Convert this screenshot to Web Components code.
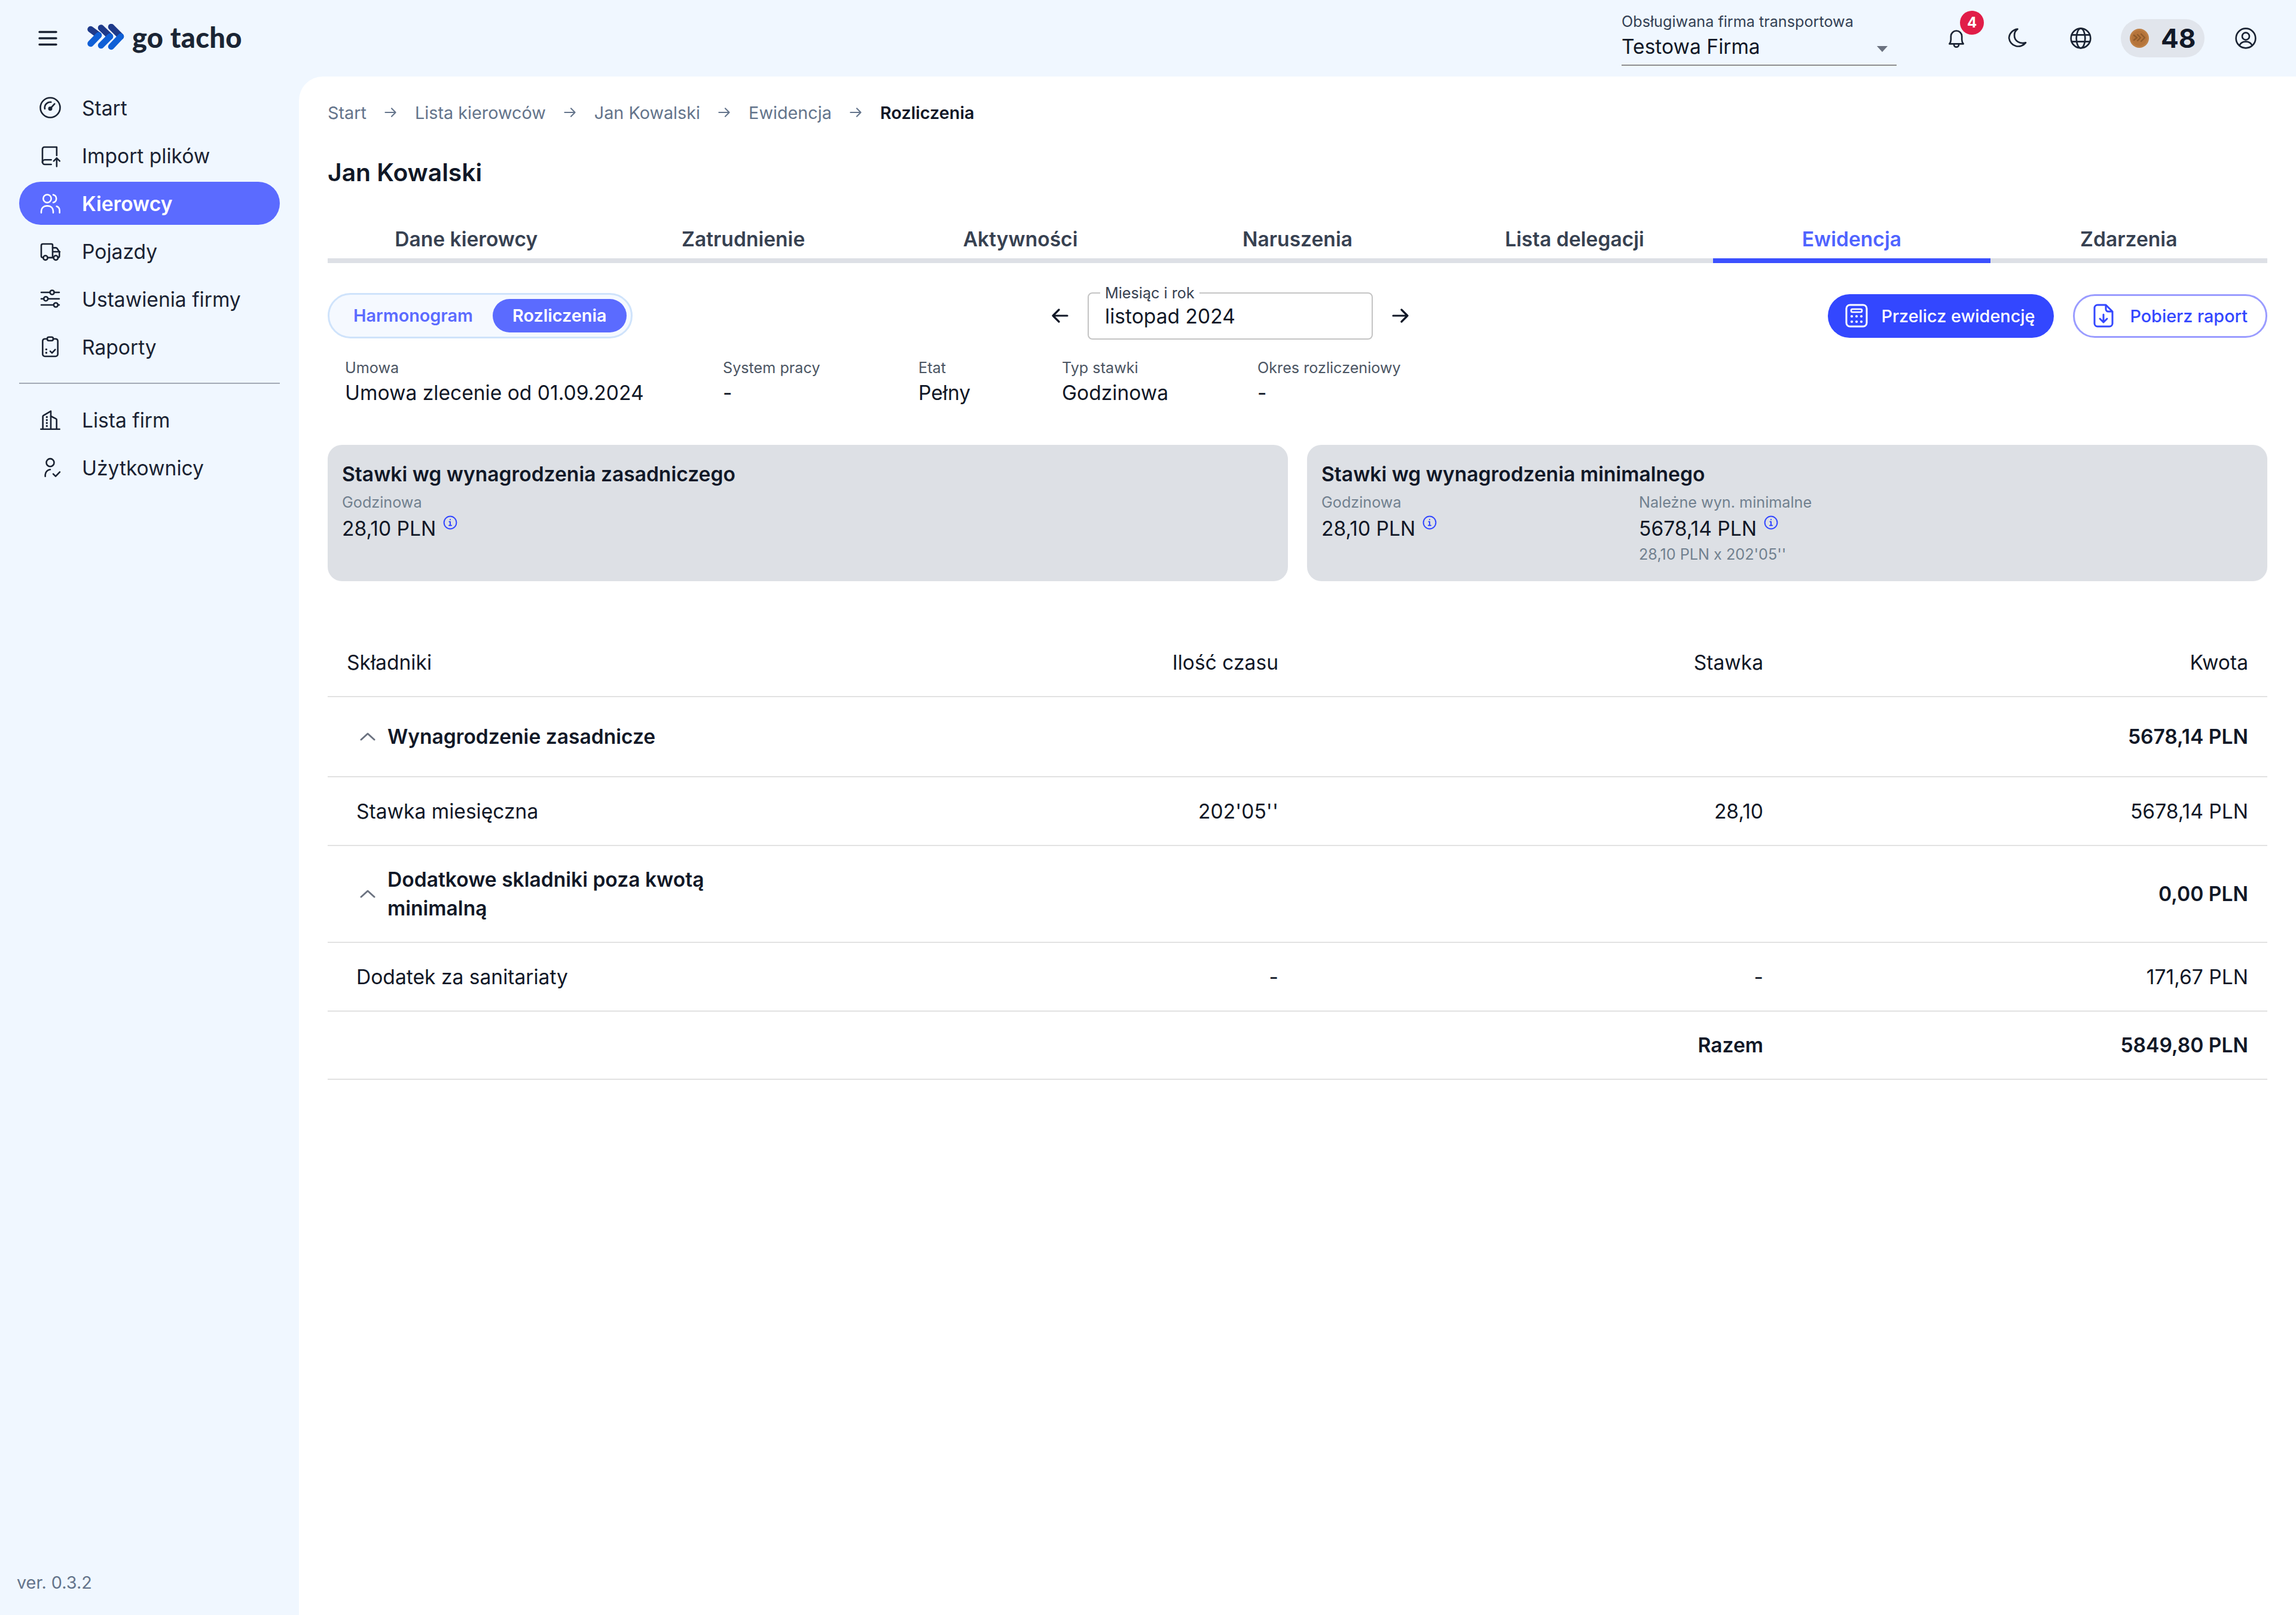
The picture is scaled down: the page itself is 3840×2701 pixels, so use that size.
<!DOCTYPE html>
<html lang="pl">
<head>
<meta charset="utf-8">
<title>go tacho</title>
<style>
html, body { margin: 0; padding: 0; background: #f0f7ff; }
body { font-family: Inter, "Noto Sans", sans-serif; color: #111827; }
</style>
</head>
<body>
<app-shell>
    <top-bar slot="top"></top-bar>
    <side-nav slot="side">
        <nav-item icon="gauge">Start</nav-item>
        <nav-item icon="upload">Import plików</nav-item>
        <nav-item icon="users" active>Kierowcy</nav-item>
        <nav-item icon="truck">Pojazdy</nav-item>
        <nav-item icon="sliders">Ustawienia firmy</nav-item>
        <nav-item icon="clipboard">Raporty</nav-item>
        <nav-item icon="building" slot="second">Lista firm</nav-item>
        <nav-item icon="usercheck" slot="second">Użytkownicy</nav-item>
    </side-nav>
    <main-panel slot="main">
        <bread-crumbs items="Start|Lista kierowców|Jan Kowalski|Ewidencja|Rozliczenia"></bread-crumbs>
        <page-title>Jan Kowalski</page-title>
        <tab-bar items="Dane kierowcy|Zatrudnienie|Aktywności|Naruszenia|Lista delegacji|Ewidencja|Zdarzenia" active="5"></tab-bar>
        <tool-bar></tool-bar>
        <info-row></info-row>
        <rate-cards>
            <rate-card heading="Stawki wg wynagrodzenia zasadniczego">
                <rate-value label="Godzinowa" value="28,10 PLN"></rate-value>
            </rate-card>
            <rate-card heading="Stawki wg wynagrodzenia minimalnego">
                <rate-value label="Godzinowa" value="28,10 PLN"></rate-value>
                <rate-value label="Należne wyn. minimalne" value="5678,14 PLN" note="28,10 PLN x 202'05''"></rate-value>
            </rate-card>
        </rate-cards>
        <pay-table>
            <pay-row kind="head" h="114" cells="Składniki|Ilość czasu|Stawka|Kwota"></pay-row>
            <pay-row kind="group" h="134" cells="Wynagrodzenie zasadnicze|||5678,14 PLN"></pay-row>
            <pay-row kind="item" h="115" cells="Stawka miesięczna|202'05''|28,10|5678,14 PLN"></pay-row>
            <pay-row kind="group" h="162" cells="Dodatkowe skladniki poza kwotą minimalną|||0,00 PLN"></pay-row>
            <pay-row kind="item" h="115" cells="Dodatek za sanitariaty|-|-|171,67 PLN"></pay-row>
            <pay-row kind="total" h="114" cells="||Razem|5849,80 PLN"></pay-row>
        </pay-table>
    </main-panel>
</app-shell>

<script>
const NAV_ICONS = {
    gauge: '<circle cx="12" cy="12" r="9.9"/><path d="M6.6 13.2a5.6 5.6 0 0 1 6.2-6.7"/><path d="M12.6 12.4 16.4 8.2"/><circle cx="12" cy="13" r="1.3" fill="currentColor"/>',
    upload: '<path d="M4.2 19V5.6a2 2 0 0 1 2-2h12.3V12"/><path d="M4.2 18.6a2.3 2.3 0 0 1 2.3-2.3H13"/><path d="M4.2 18.6a2.4 2.4 0 0 0 2.4 2.4H13"/><path d="M18.5 23v-8.4M15.5 17.6l3-3 3 3"/>',
    users: '<circle cx="9" cy="7.3" r="4"/><path d="M15 3.4a4 4 0 0 1 0 7.8"/><path d="M3 21.5v-1.6a5.3 5.3 0 0 1 5.3-5.3h1.4a5.3 5.3 0 0 1 5.3 5.3v1.6"/><path d="M18.4 15a4.6 4.6 0 0 1 3 4.4v2.1"/>',
    truck: '<path d="M5 18.5H4.4A1.6 1.6 0 0 1 3 17V6.4A1.6 1.6 0 0 1 4.6 4.8h8.6a1.2 1.2 0 0 1 1.2 1.2v12.5H9.4"/><path d="M14.4 8.6h3.2a1.6 1.6 0 0 1 1.3.7l2 3a1.6 1.6 0 0 1 .3.9v3.8a1.6 1.6 0 0 1-1.6 1.5"/><path d="M14.4 18.5h1"/><path d="M14.6 12.6h7"/><circle cx="7.2" cy="18.7" r="2.2"/><circle cx="17.6" cy="18.7" r="2.2"/>',
    sliders: '<path d="M3 5.4h8.8M16 5.4h5M3 11.8h2.5M9.7 11.8H21M3 18h12.4M19.8 18H21"/><circle cx="13.9" cy="5.4" r="2.1"/><circle cx="7.6" cy="11.8" r="2.1"/><circle cx="17.6" cy="18" r="2.1"/>',
    clipboard: '<path d="M9 4H6.6a2.2 2.2 0 0 0-2.2 2.2v13.2a2.2 2.2 0 0 0 2.2 2.2h10.8a2.2 2.2 0 0 0 2.2-2.2V6.2A2.2 2.2 0 0 0 17.4 4H15"/><rect x="9" y="2.2" width="6" height="3.6" rx="1.6"/><path d="M12 16.4l1.8 1.8 3.2-3.4"/><path d="M8 14.6h.1M8 18h.1" stroke-width="2"/>',
    building: '<path d="M2.6 21.4h18.8"/><path d="M4.6 21.4V8.6a1 1 0 0 1 .6-.9L12.6 3.4v18"/><path d="M12.6 8.4l5.2 2.6a1 1 0 0 1 .6.9v9.5"/><path d="M8.6 9.2v.1M8.6 12.2v.1M8.6 15.2v.1M8.6 18.2v.1" stroke-width="2"/>',
    usercheck: '<circle cx="12" cy="7" r="3.9"/><path d="M7 20.8v-1.6a5.4 5.4 0 0 1 5-5.2"/><path d="M15 18.4l2.4 2.4 4.2-4.4"/>'
};

class AppShell extends HTMLElement {
    constructor() {
        super();
        this.attachShadow({ mode: 'open' });
    }

    connectedCallback() {
        this.shadowRoot.innerHTML = `
            <style>
            :host {
                display: grid;
                grid-template-columns: 500px 1fr;
                grid-template-rows: 128px 1fr;
                width: 3840px;
                height: 2701px;
                background: #f0f7ff;
                font-family: Inter, "Noto Sans", sans-serif;
                overflow: hidden;
            }
            .top { grid-column: 1 / 3; }
            </style>
            <div class="top"><slot name="top"></slot></div>
            <slot name="side"></slot>
            <slot name="main"></slot>
        `;
    }
}

class TopBar extends HTMLElement {
    constructor() {
        super();
        this.attachShadow({ mode: 'open' });
    }

    connectedCallback() {
        this.shadowRoot.innerHTML = `
            <style>
            :host { display: flex; align-items: center; height: 128px; color: #1a2333; }
            .burger { display: block; margin-left: 62px; width: 36px; height: 36px; }
            .mark { display: block; margin-left: 47px; }
            .word { margin-left: 12px; font: 900 47px/1 Lato, sans-serif; color: #1b2534; letter-spacing: .3px; position: relative; top: -2px; }
            .select { margin-left: auto; width: 460px; border-bottom: 2px solid #8e8e8e; padding-bottom: 6px; }
            .select-label { font-size: 25.2px; line-height: 36px; color: #334155; }
            .select-value { display: flex; justify-content: space-between; align-items: center; font-size: 33.6px; line-height: 48px; color: #111827; }
            .select-value i { width: 0; height: 0; margin: 0 15px 0 0; border: 9px solid transparent; border-top: 10px solid #6b7280; border-bottom: 0; position: relative; top: 4px; }
            svg.ic { display: block; width: 40px; height: 40px; fill: none; stroke: currentColor; stroke-width: 1.6; stroke-linecap: round; stroke-linejoin: round; }
            .bell { position: relative; margin-left: 80px; }
            .badge { position: absolute; left: 26px; top: -26px; width: 40px; height: 40px; border-radius: 50%; background: #e11d48; color: #fff; font-size: 24px; font-weight: 700; line-height: 40px; text-align: center; }
            .moon { margin-left: 63px; }
            .globe { margin-left: 65px; }
            .coins { margin-left: 47px; display: flex; align-items: center; box-sizing: border-box; width: 140px; height: 64px; padding-left: 14px; border-radius: 32px; background: #e1e5ec; }
            .coins b { margin-left: 19px; font-size: 44px; font-weight: 700; color: #111827; }
            .user { margin: 0 64px 0 49px; }
            </style>
            <svg class="burger" viewBox="0 0 36 36" fill="none" stroke="#1a2333" stroke-width="3.4" stroke-linecap="round"><path d="M4 7.5h28M4 18h28M4 28.5h28"/></svg>
            <svg class="mark" width="64" height="48" viewBox="0 0 64 48" fill="none" stroke-width="10.5" stroke-linecap="round">
                <path d="M6.5 9 20 19" stroke="#1e3a8a"/><path d="M20 19 6.5 33" stroke="#0f5fd6"/>
                <path d="M24 6.5 39 21" stroke="#1e3a8a"/><path d="M39 21 24 36" stroke="#0f5fd6"/>
                <path d="M41 5 57 21" stroke="#1e3a8a"/><path d="M57 21 41 38" stroke="#0f5fd6"/>
            </svg>
            <span class="word">go tacho</span>
            <div class="select">
                <div class="select-label">Obsługiwana firma transportowa</div>
                <div class="select-value"><span>Testowa Firma</span><i></i></div>
            </div>
            <div class="bell">
                <svg class="ic" viewBox="0 0 24 24"><path d="M5 17.6c1-1.2 1.5-2.4 1.5-4.1V10a5.5 5.5 0 0 1 11 0v3.5c0 1.7.5 2.9 1.5 4.1z"/><path d="M9.6 17.8v.6a2.4 2.4 0 0 0 4.8 0v-.6"/></svg>
                <span class="badge">4</span>
            </div>
            <svg class="ic moon" viewBox="0 0 24 24"><path d="M11.6 2.8a7.6 7.6 0 0 0-3.2 6.4c0 5.6 5.6 9 11.4 7.2a9.4 9.4 0 0 1-16.8-4.6A9.6 9.6 0 0 1 11.6 2.8z"/></svg>
            <svg class="ic globe" viewBox="0 0 24 24"><circle cx="12" cy="12" r="9.8"/><ellipse cx="12" cy="12" rx="4.4" ry="9.8"/><path d="M3 8.6h18M3 15.4h18"/></svg>
            <div class="coins">
                <svg width="34" height="34" viewBox="0 0 34 34">
                    <circle cx="17" cy="17" r="16" fill="#bd7f45"/>
                    <circle cx="17" cy="17" r="13" fill="#b5743a"/>
                    <g fill="none" stroke="#8f5a2a" stroke-width="2.4" stroke-linecap="round" stroke-linejoin="round"><path d="M8 12l5 4-5 4M14 11l5 5-5 5M20 10l6 6-6 6"/></g>
                </svg>
                <b>48</b>
            </div>
            <svg class="ic user" viewBox="0 0 24 24"><circle cx="12" cy="12" r="9.8"/><circle cx="12" cy="10" r="3.6"/><path d="M5.6 19.4c1-2.6 3.4-4 6.4-4s5.4 1.4 6.4 4"/></svg>
        `;
    }
}

class SideNav extends HTMLElement {
    constructor() {
        super();
        this.attachShadow({ mode: 'open' });
    }

    connectedCallback() {
        this.shadowRoot.innerHTML = `
            <style>
            :host { display: flex; flex-direction: column; box-sizing: border-box; padding: 16px 32px 36px; }
            .list { display: flex; flex-direction: column; gap: 8px; }
            hr { width: 100%; height: 2px; margin: 24px 0; border: 0; background: #a3aab5; }
            .ver { margin-top: auto; font-size: 28.8px; line-height: 36px; color: #64748b; margin-left: -4px; }
            </style>
            <div class="list"><slot></slot></div>
            <hr>
            <div class="list"><slot name="second"></slot></div>
            <div class="ver">ver. 0.3.2</div>
        `;
    }
}

class NavItem extends HTMLElement {
    constructor() {
        super();
        this.attachShadow({ mode: 'open' });
    }

    connectedCallback() {
        const active = this.hasAttribute('active');
        this.shadowRoot.innerHTML = `
            <style>
            :host {
                display: flex;
                align-items: center;
                height: 72px;
                padding-left: 32px;
                border-radius: 36px;
                background: ${active ? '#5b6bff' : 'transparent'};
                color: ${active ? '#fff' : '#1a2333'};
                font-size: 33.6px;
                font-weight: ${active ? 600 : 400};
            }
            svg { width: 40px; height: 40px; margin-right: 33px; fill: none; stroke: currentColor; stroke-width: 1.55; stroke-linecap: round; stroke-linejoin: round; }
            </style>
            <svg viewBox="0 0 24 24">${NAV_ICONS[this.getAttribute('icon')]}</svg>
            <slot></slot>
        `;
    }
}

class MainPanel extends HTMLElement {
    constructor() {
        super();
        this.attachShadow({ mode: 'open' });
    }

    connectedCallback() {
        this.shadowRoot.innerHTML = `
            <style>
            :host { display: block; box-sizing: border-box; padding: 40px 48px 0; background: #fff; border-top-left-radius: 40px; color: #111827; }
            </style>
            <slot></slot>
        `;
    }
}

class BreadCrumbs extends HTMLElement {
    constructor() {
        super();
        this.attachShadow({ mode: 'open' });
    }

    connectedCallback() {
        const items = this.getAttribute('items').split('|');
        const arrow = '<svg viewBox="0 0 22 20" fill="none" stroke="#64748b" stroke-width="2.2" stroke-linecap="round" stroke-linejoin="round"><path d="M1.5 10h18M12.5 3l7 7-7 7"/></svg>';
        const parts = items.map((t, i) => `<span class="${i === items.length - 1 ? 'cur' : ''}">${t}</span>`);
        this.shadowRoot.innerHTML = `
            <style>
            :host { display: flex; align-items: center; gap: 30px; height: 40px; font-size: 28.8px; color: #64748b; }
            svg { width: 21px; height: 20px; }
            .cur { color: #111827; font-weight: 600; }
            </style>
            ${parts.join(arrow)}
        `;
    }
}

class PageTitle extends HTMLElement {
    constructor() {
        super();
        this.attachShadow({ mode: 'open' });
    }

    connectedCallback() {
        this.shadowRoot.innerHTML = `
            <style>
            :host { display: block; margin-top: 50px; font-size: 40.8px; line-height: 60px; font-weight: 600; color: #111827; }
            </style>
            <slot></slot>
        `;
    }
}

class TabBar extends HTMLElement {
    constructor() {
        super();
        this.attachShadow({ mode: 'open' });
    }

    connectedCallback() {
        const active = Number(this.getAttribute('active'));
        const tabs = this.getAttribute('items').split('|')
            .map((t, i) => `<div class="tab${i === active ? ' on' : ''}">${t}</div>`).join('');
        this.shadowRoot.innerHTML = `
            <style>
            :host { display: grid; grid-template-columns: repeat(7, 1fr); margin-top: 50px; }
            .tab { height: 64px; line-height: 64px; border-bottom: 8px solid #dde0e6; text-align: center; font-size: 33.6px; font-weight: 600; color: #374151; }
            .on { border-bottom-color: #3b50ff; color: #4f63ff; }
            </style>
            ${tabs}
        `;
    }
}

class ToolBar extends HTMLElement {
    constructor() {
        super();
        this.attachShadow({ mode: 'open' });
    }

    connectedCallback() {
        this.shadowRoot.innerHTML = `
            <style>
            :host { display: flex; align-items: center; justify-content: space-between; height: 80px; margin-top: 48px; }
            .seg { display: flex; box-sizing: border-box; height: 76px; padding: 7px; border: 3px solid #cfe3fb; border-radius: 38px; background: #f5f9ff; font-size: 28.8px; font-weight: 600; }
            .seg div { height: 56px; line-height: 56px; padding: 0 33px; border-radius: 28px; color: #5b6bff; }
            .seg .on { background: #5b6bff; color: #fff; }
            .picker { display: flex; align-items: center; gap: 32px; }
            .picker svg { display: block; width: 28px; height: 26px; }
            .field { position: relative; box-sizing: border-box; width: 477px; height: 79px; padding-left: 27px; border: 2px solid #c4c4c4; border-radius: 8px; font-size: 33.6px; line-height: 75px; color: #111827; }
            .field span { position: absolute; left: 19px; top: -19px; padding: 0 8px; background: #fff; font-size: 25.2px; line-height: 36px; color: #374151; }
            .actions { display: flex; gap: 32px; }
            .btn { display: flex; align-items: center; box-sizing: border-box; height: 73px; border-radius: 37px; font-size: 28.8px; font-weight: 500; }
            .btn svg { display: block; width: 40px; height: 40px; fill: none; stroke-linecap: round; stroke-linejoin: round; }
            .primary { padding: 0 32px 0 28px; background: #3347ff; color: #fff; }
            .primary svg { margin-right: 21px; stroke: #fff; stroke-width: 3; }
            .ghost { padding: 0 30px 0 28px; border: 3px solid #9a9cff; color: #3347ff; background: #fff; }
            .ghost svg { margin-right: 24px; stroke: #3347ff; stroke-width: 3; }
            </style>
            <div class="seg"><div>Harmonogram</div><div class="on">Rozliczenia</div></div>
            <div class="picker">
                <svg viewBox="0 0 28 26" fill="none" stroke="#111827" stroke-width="3.2" stroke-linecap="round" stroke-linejoin="round"><path d="M26 13H2M12 3 2 13l10 10"/></svg>
                <div class="field"><span>Miesiąc i rok</span>listopad 2024</div>
                <svg viewBox="0 0 28 26" fill="none" stroke="#111827" stroke-width="3.2" stroke-linecap="round" stroke-linejoin="round"><path d="M2 13h24M16 3l10 10-10 10"/></svg>
            </div>
            <div class="actions">
                <div class="btn primary">
                    <svg viewBox="0 0 40 40"><rect x="3" y="2" width="34" height="36" rx="6"/><rect x="11" y="9" width="18" height="5" rx="2" stroke-width="2.6"/><path d="M12 21h.1M20 21h.1M28 21h.1M12 30h.1M20 30h.1M28 30h.1" stroke-width="4.2"/></svg>
                    Przelicz ewidencję
                </div>
                <div class="btn ghost">
                    <svg viewBox="0 0 40 40"><path d="M24 2H10a5 5 0 0 0-5 5v26a5 5 0 0 0 5 5h20a5 5 0 0 0 5-5V13z"/><path d="M24 3v6a4 4 0 0 0 4 4h6"/><path d="M20 18v12M14 25l6 6 6-6"/></svg>
                    Pobierz raport
                </div>
            </div>
        `;
    }
}

class InfoRow extends HTMLElement {
    constructor() {
        super();
        this.attachShadow({ mode: 'open' });
    }

    connectedCallback() {
        const cols = [
            ['Umowa', 'Umowa zlecenie od 01.09.2024'],
            ['System pracy', '-'],
            ['Etat', 'Pełny'],
            ['Typ stawki', 'Godzinowa'],
            ['Okres rozliczeniowy', '-']
        ];
        this.shadowRoot.innerHTML = `
            <style>
            :host { display: grid; grid-template-columns: 632px 327px 240px 327px auto; margin-top: 29px; padding-left: 29px; }
            .k { font-size: 25.2px; line-height: 36px; color: #4b5563; }
            .v { font-size: 33.6px; line-height: 48px; color: #111827; }
            </style>
            ${cols.map(c => `<div><div class="k">${c[0]}</div><div class="v">${c[1]}</div></div>`).join('')}
        `;
    }
}

class RateCards extends HTMLElement {
    constructor() {
        super();
        this.attachShadow({ mode: 'open' });
    }

    connectedCallback() {
        this.shadowRoot.innerHTML = `
            <style>
            :host { display: grid; grid-template-columns: 1fr 1fr; gap: 32px; margin-top: 63px; }
            </style>
            <slot></slot>
        `;
    }
}

class RateCard extends HTMLElement {
    constructor() {
        super();
        this.attachShadow({ mode: 'open' });
    }

    connectedCallback() {
        this.shadowRoot.innerHTML = `
            <style>
            :host { display: block; box-sizing: border-box; height: 228px; padding: 27px 24px 0; border-radius: 24px; background: #dde0e5; }
            h3 { margin: 0 0 7px; font-size: 33.6px; line-height: 44px; font-weight: 600; color: #111827; }
            .vals { display: grid; grid-template-columns: 531px 1fr; }
            </style>
            <h3>${this.getAttribute('heading')}</h3>
            <div class="vals"><slot></slot></div>
        `;
    }
}

class RateValue extends HTMLElement {
    constructor() {
        super();
        this.attachShadow({ mode: 'open' });
    }

    connectedCallback() {
        const note = this.getAttribute('note');
        this.shadowRoot.innerHTML = `
            <style>
            :host { display: block; }
            .k, .n { font-size: 25.2px; line-height: 36px; color: #71808f; }
            .v { display: flex; align-items: flex-start; margin-top: 2px; font-size: 33.6px; line-height: 48px; color: #111827; }
            svg { display: block; width: 24px; height: 24px; margin: 2px 0 0 12px; fill: none; stroke: #3347ff; stroke-width: 2; stroke-linecap: round; stroke-linejoin: round; }
            .n { margin-top: 1px; }
            </style>
            <div class="k">${this.getAttribute('label')}</div>
            <div class="v">${this.getAttribute('value')}
                <svg viewBox="0 0 24 24"><circle cx="12" cy="12" r="10.4"/><path d="M10.4 10.6H12v6.2M10 16.8h4M12 6.8v.1"/></svg>
            </div>
            ${note ? `<div class="n">${note}</div>` : ''}
        `;
    }
}

class PayTable extends HTMLElement {
    constructor() {
        super();
        this.attachShadow({ mode: 'open' });
    }

    connectedCallback() {
        this.shadowRoot.innerHTML = `
            <style>
            :host { display: block; margin-top: 80px; }
            </style>
            <slot></slot>
        `;
    }
}

class PayRow extends HTMLElement {
    constructor() {
        super();
        this.attachShadow({ mode: 'open' });
    }

    connectedCallback() {
        const kind = this.getAttribute('kind');
        const cells = this.getAttribute('cells').split('|');
        const bold = kind === 'group' || kind === 'total';
        const first = kind === 'group'
            ? `<svg viewBox="0 0 26 14" fill="none" stroke="#6b7280" stroke-width="3" stroke-linecap="round" stroke-linejoin="round"><path d="M2 12 13 2l11 10"/></svg><span>${cells[0]}</span>`
            : `<span>${cells[0]}</span>`;
        this.shadowRoot.innerHTML = `
            <style>
            :host {
                display: grid;
                grid-template-columns: repeat(4, 1fr);
                align-items: center;
                box-sizing: border-box;
                height: ${this.getAttribute('h')}px;
                border-bottom: 2px solid #e2e2e2;
                font-size: 33.6px;
                line-height: 48px;
                font-weight: ${bold ? 600 : 400};
                color: #111827;
            }
            .c { padding-right: 32px; text-align: right; }
            .f { display: flex; align-items: center; text-align: left; padding-left: ${kind === 'head' ? 32 : kind === 'item' ? 48 : 54}px; }
            svg { flex: none; width: 26px; height: 14px; margin-right: 20px; }
            </style>
            <div class="c f">${first}</div>
            <div class="c">${cells[1]}</div>
            <div class="c">${cells[2]}</div>
            <div class="c">${cells[3]}</div>
        `;
    }
}

customElements.define('app-shell', AppShell);
customElements.define('top-bar', TopBar);
customElements.define('side-nav', SideNav);
customElements.define('nav-item', NavItem);
customElements.define('main-panel', MainPanel);
customElements.define('bread-crumbs', BreadCrumbs);
customElements.define('page-title', PageTitle);
customElements.define('tab-bar', TabBar);
customElements.define('tool-bar', ToolBar);
customElements.define('info-row', InfoRow);
customElements.define('rate-cards', RateCards);
customElements.define('rate-card', RateCard);
customElements.define('rate-value', RateValue);
customElements.define('pay-table', PayTable);
customElements.define('pay-row', PayRow);
</script>
</body>
</html>
